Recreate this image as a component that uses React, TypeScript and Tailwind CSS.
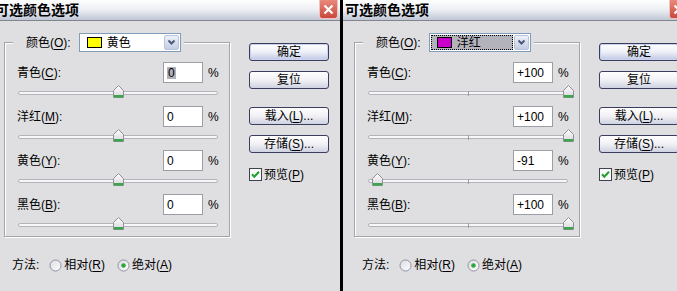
import React from "react";

type Row = { name: string; key: string; value: number; text: string; selected?: boolean };

const Hotkey = ({ name, k }: { name: string; k: string }) => (
  <span className="whitespace-nowrap">
    {name}(<span className="underline underline-offset-2">{k}</span>):
  </span>
);

const Thumb = () => (
  <svg width="11" height="13" viewBox="0 0 11 13">
    <defs>
      <linearGradient id="thumbFill" x1="0" y1="0" x2="0" y2="1">
        <stop offset="0" stopColor="#ffffff" />
        <stop offset="1" stopColor="#d6d6dc" />
      </linearGradient>
    </defs>
    <path d="M0.5 5.5 L5.5 0.5 L10.5 5.5 V12.5 H0.5 Z" fill="url(#thumbFill)" stroke="#8e8f97" />
    <rect x="1" y="10" width="9" height="2.5" fill="#3aa54a" />
  </svg>
);

const Slider = ({ value, short }: { value: number; short?: boolean }) => (
  <div className={short ? "h-[21px] pl-[13px]" : "h-[23px] pl-[13px]"}>
    <div className="relative mt-[8px] h-[4px] w-[200px] rounded-full border border-[#b3b3ba] bg-[#f7f7f9]">
      <div className="absolute left-[99px] top-[-1px] h-[5px] w-px bg-[#9c9ca4]" />
      <div className="absolute top-[-7px]" style={{ left: 100 + value - 6 }}>
        <Thumb />
      </div>
    </div>
  </div>
);

const Dropdown = ({ swatch, name, focused }: { swatch: string; name: string; focused?: boolean }) => (
  <div className="flex h-[19px] w-[102px] items-center border border-[#7f9db9] bg-white">
    <div
      className={
        focused
          ? "ml-[1px] flex h-[15px] flex-1 items-center border border-dotted border-black bg-[#b3b3bb] pl-[5px]"
          : "ml-[1px] flex h-[15px] flex-1 items-center border border-transparent pl-[5px]"
      }
    >
      <span className={`h-[11px] w-[15px] border border-black ${swatch}`} />
      <span className="ml-[5px] text-[12px] leading-none text-black">{name}</span>
    </div>
    <div className="m-[1px] flex h-[15px] w-[15px] items-center justify-center rounded-[2px] border border-[#b8c4de] bg-gradient-to-b from-[#eef1f8] to-[#c4cde3]">
      <svg width="9" height="7" viewBox="0 0 9 7">
        <path d="M1.5 1.5 L4.5 4.5 L7.5 1.5" fill="none" stroke="#4b5a7a" strokeWidth="2" />
      </svg>
    </div>
  </div>
);

const Radio = ({ checked }: { checked?: boolean }) => (
  <svg width="13" height="13" viewBox="0 0 13 13">
    <defs>
      <linearGradient id="radioFill" x1="0" y1="0" x2="1" y2="1">
        <stop offset="0" stopColor="#dcdce2" />
        <stop offset="1" stopColor="#ffffff" />
      </linearGradient>
    </defs>
    <circle cx="6.5" cy="6.5" r="5.5" fill="url(#radioFill)" stroke="#8d91a3" />
    {checked && <circle cx="6.5" cy="6.5" r="2.3" fill="#2fa53b" />}
  </svg>
);

const Checkbox = () => (
  <svg width="13" height="13" viewBox="0 0 13 13">
    <rect x="0.5" y="0.5" width="12" height="12" fill="#fbfbfb" stroke="#3f4350" />
    <path d="M3 6.3 L5.3 8.7 L10 3.8" fill="none" stroke="#23a02f" strokeWidth="2" />
  </svg>
);

const Button = ({ children, primary }: { children: React.ReactNode; primary?: boolean }) => (
  <div
    className={
      primary
        ? "flex h-[18px] w-[80px] items-center justify-center rounded-[3px] border border-[#3b3d5c] bg-gradient-to-b from-white via-[#eef0f8] to-[#bfc8e4] text-[12px] leading-none text-black shadow-[inset_0_0_0_1px_#c9d3ef]"
        : "flex h-[18px] w-[80px] items-center justify-center rounded-[3px] border border-[#3b3d5c] bg-gradient-to-b from-white via-[#f1f1f5] to-[#cfd2e2] text-[12px] leading-none text-black"
    }
  >
    {children}
  </div>
);

const Dialog = ({ swatch, name, focused, rows }: { swatch: string; name: string; focused?: boolean; rows: Row[] }) => (
  <div className="flex h-[291px] w-[350px] shrink-0 flex-col bg-[#dfdfe1] font-['Liberation_Sans','Noto_Sans_CJK_SC',sans-serif]">
    <div className="flex h-[21px] items-start justify-between border-b border-[#84848e] bg-gradient-to-b from-[#fefefe] via-[#eceef3] to-[#c0c7d6]">
      <span className="pl-[5px] pt-[2px] text-[14px] font-bold leading-[16px] text-black">可选颜色选项</span>
      <div className="mr-[2px] flex h-[19px] w-[19px] items-center justify-center rounded-b-[3px] border border-t-0 border-[#f1c2bc] bg-gradient-to-b from-[#e88a7c] to-[#c9473a]">
        <svg width="11" height="11" viewBox="0 0 11 11">
          <path d="M1.5 1.5 L9.5 9.5 M9.5 1.5 L1.5 9.5" stroke="white" strokeWidth="2.2" />
        </svg>
      </div>
    </div>

    <div className="flex pl-[14px] pt-[12px]">
      <div className="flex w-[226px] flex-col">
        <fieldset className="border border-[#a3a3aa] pt-[10px] shadow-[inset_1px_1px_0_#ffffff,1px_1px_0_#ffffff]">
          <legend className="ml-[8px] flex items-center bg-[#dfdfe1] pl-[13px] pr-[3px]">
            <span className="mr-[8px] text-[12px] leading-none text-black">
              <Hotkey name="颜色" k="O" />
            </span>
            <Dropdown swatch={swatch} name={name} focused={focused} />
          </legend>

          {rows.map((row, i) => (
            <div key={row.key} className="flex flex-col">
              <div className="flex h-[21px] items-center pl-[12px] text-[12px] leading-none text-black">
                <span className="w-[146px]">
                  <Hotkey name={row.name} k={row.key} />
                </span>
                <span className="flex h-[21px] w-[40px] items-center border border-[#9d9da6] bg-white pl-[3px]">
                  <span className={row.selected ? "bg-[#b0b0b8] px-[1px]" : ""}>{row.text}</span>
                </span>
                <span className="ml-[5px]">%</span>
              </div>
              <Slider value={row.value} short={i === rows.length - 1} />
            </div>
          ))}
        </fieldset>

        <div className="mt-[20px] flex h-[16px] items-center pl-[8px] text-[12px] leading-none text-black">
          <span>方法:</span>
          <span className="ml-[10px]">
            <Radio />
          </span>
          <span className="ml-[2px]">
            相对(<span className="underline underline-offset-2">R</span>)
          </span>
          <span className="ml-[12px]">
            <Radio checked />
          </span>
          <span className="ml-[2px]">
            绝对(<span className="underline underline-offset-2">A</span>)
          </span>
        </div>
      </div>

      <div className="ml-[19px] mt-[10px] flex flex-col">
        <Button primary>确定</Button>
        <div className="mt-[10px]">
          <Button>复位</Button>
        </div>
        <div className="mt-[18px]">
          <Button>
            载入(<span className="underline underline-offset-2">L</span>)...
          </Button>
        </div>
        <div className="mt-[10px]">
          <Button>
            存储(<span className="underline underline-offset-2">S</span>)...
          </Button>
        </div>
        <div className="mt-[15px] flex items-center text-[12px] leading-none text-black">
          <Checkbox />
          <span className="ml-[2px]">
            预览(<span className="underline underline-offset-2">P</span>)
          </span>
        </div>
      </div>
    </div>
  </div>
);

const yellowRows: Row[] = [
  { name: "青色", key: "C", value: 0, text: "0", selected: true },
  { name: "洋红", key: "M", value: 0, text: "0" },
  { name: "黄色", key: "Y", value: 0, text: "0" },
  { name: "黑色", key: "B", value: 0, text: "0" },
];

const magentaRows: Row[] = [
  { name: "青色", key: "C", value: 100, text: "+100" },
  { name: "洋红", key: "M", value: 100, text: "+100" },
  { name: "黄色", key: "Y", value: -91, text: "-91" },
  { name: "黑色", key: "B", value: 100, text: "+100" },
];

export default function App() {
  return (
    <div className="flex h-[291px] w-[677px] overflow-hidden bg-black">
      <div className="w-[340px] shrink-0 overflow-hidden">
        <div className="-ml-[10px]">
          <Dialog swatch="bg-[#ffff00]" name="黄色" rows={yellowRows} />
        </div>
      </div>
      <div className="ml-[3px] w-[334px] shrink-0 overflow-hidden">
        <div className="-ml-[3px]">
          <Dialog swatch="bg-[#cc00cc]" name="洋红" focused rows={magentaRows} />
        </div>
      </div>
    </div>
  );
}
